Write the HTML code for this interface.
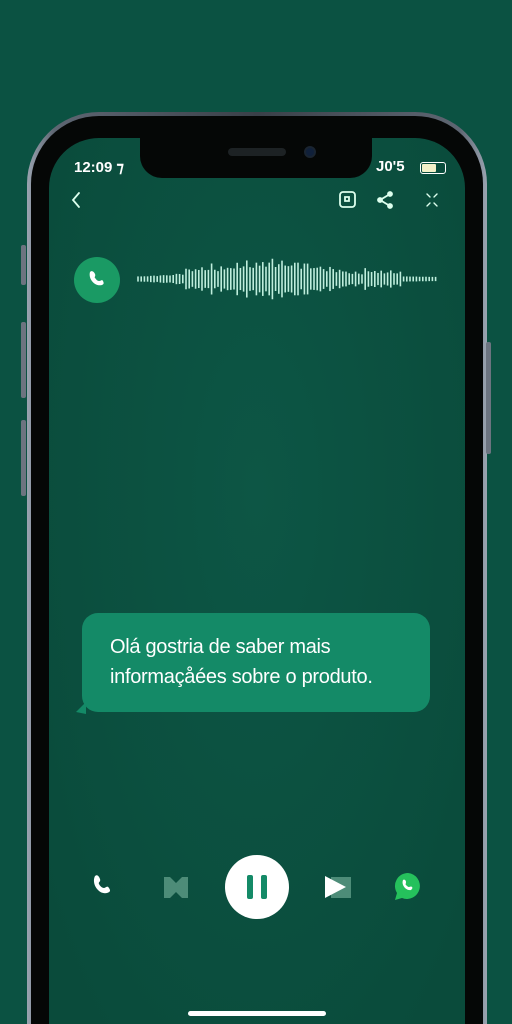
<!DOCTYPE html>
<html><head><meta charset="utf-8"><style>
*{margin:0;padding:0;box-sizing:border-box}
html,body{width:512px;height:1024px;overflow:hidden}
body{background:#0b5242;font-family:"Liberation Sans",sans-serif;position:relative}
#wrap{position:absolute;left:0;top:0;width:512px;height:1024px;overflow:hidden}
.frame{position:absolute;left:27px;top:112px;width:460px;height:912px;border-radius:72px 72px 0 0;background:linear-gradient(90deg,#9aa3b0,#5e6672 6%,#3a4048 50%,#5e6672 94%,#9aa3b0)}
.bezel{position:absolute;left:31px;top:116px;width:452px;height:908px;border-radius:68px 68px 0 0;background:#050706}
.screen{position:absolute;left:49px;top:138px;width:416px;height:886px;border-radius:50px 50px 0 0;background:radial-gradient(ellipse at 50% 40%,#0d5645,#0a4b3b 90%);overflow:hidden}
.notch{position:absolute;left:140px;top:116px;width:232px;height:62px;background:#050706;border-radius:0 0 22px 22px}
.spk{position:absolute;left:228px;top:148px;width:58px;height:8px;border-radius:4px;background:#1d2224}
.cam{position:absolute;left:304px;top:146px;width:12px;height:12px;border-radius:50%;background:#10203a;border:2px solid #1a2430}
.btn{position:absolute;width:5px;background:#6c7480;border-radius:2px}
.t{position:absolute;color:#fff;font-size:15px;font-weight:bold}
.bubble{position:absolute;left:82px;top:613px;width:348px;height:99px;background:#148a67;border-radius:16px;color:#fff;font-size:20px;line-height:30px;padding:19px 0 0 28px;letter-spacing:-0.3px}
</style></head><body><div id="wrap">
<div class="frame"></div>
<div class="btn" style="left:21px;top:245px;height:40px"></div>
<div class="btn" style="left:21px;top:322px;height:76px"></div>
<div class="btn" style="left:21px;top:420px;height:76px"></div>
<div class="btn" style="left:486px;top:342px;height:112px"></div>
<div class="bezel"></div>
<div class="screen"></div>
<div class="notch"></div><div class="spk"></div><div class="cam"></div>
<div class="t" style="left:74px;top:158px">12:09 ⁊</div>
<div class="t" style="left:376px;top:158px">J0'5</div>
<div style="position:absolute;left:420px;top:162px;width:26px;height:12px;border:1.5px solid #fff;border-radius:3px;padding:1px"><div style="width:14px;height:100%;background:#f3f0c8;border-radius:1px"></div></div>
<svg style="position:absolute;left:0;top:0" width="512" height="1024">
<g stroke="#dfe" stroke-width="1.8" fill="none" stroke-linecap="round">
<path d="M79 193l-6 7 6 7"/>
<rect x="340" y="192" width="15" height="15" rx="3"/><path d="M345 197h4v4h-4z"/>
<circle cx="390" cy="194" r="2" fill="#dfe"/><circle cx="380" cy="200" r="2" fill="#dfe"/><circle cx="390" cy="206" r="2" fill="#dfe"/><path d="M390 194l-10 6 10 6"/>
<path d="M427 194l3 3m7-3l-3 3m-7 9l3-3m7 3l-3-3" stroke-width="1.4"/>
</g>
<circle cx="97" cy="280" r="23" fill="#1a9a64"/>
<path d="M90 272c2-2 4 0 5 2s-1 3 0 4 2 3 4 3 3-2 4 0 1 3-1 4c-7 2-14-6-12-13z" fill="#fff"/>
<g id="wave" stroke="#bfeedd" stroke-width="1.6"></g>
<path d="M95 876c2-2 4 0 5 3s-2 3-1 5 3 4 5 4 3-3 5 0 1 4-2 5c-8 2-16-9-12-17z" fill="#fff"/>
<path d="M164 877h6l6 6 6-6h6v21h-6l-6-6-6 6h-6z" fill="#4d8c78"/>
<circle cx="257" cy="887" r="32" fill="#fff"/>
<rect x="247" y="875" width="6" height="24" rx="2" fill="#148a67"/><rect x="261" y="875" width="6" height="24" rx="2" fill="#148a67"/>
<rect x="331" y="877" width="20" height="21" fill="#4d8c78"/><path d="M325 876l21 11-21 11z" fill="#fff"/>
<path d="M408 873a13 13 0 1 1-6 25l-7 2 2-7a13 13 0 0 1 11-20z" fill="#25c15c"/>
<path d="M403 880c1-1 3 0 3 2s-1 2 0 3 2 2 3 2 2-1 3 0 0 2-1 3c-5 1-10-5-8-10z" fill="#fff"/>
<path d="M76 712l10-10v12z" fill="#148a67"/>
<rect x="188" y="1011" width="138" height="5" rx="2.5" fill="#fff"/>
</svg>
<div class="bubble">Olá gostria de saber mais<br>informaçåées sobre o produto.</div>
</div>
<script>
var g=document.getElementById('wave'),s='';
for(var x=138;x<=438;x+=3.2){var p=(x-138)/300;
var e=Math.exp(-Math.pow((p-0.45)/0.25,2));var r=0.5+0.5*Math.abs(Math.sin(x*1.7)*Math.cos(x*0.37));
var h=2+e*19*r+(p>0.15&&p<0.25?4*r:0)+(p>0.75&&p<0.88?5*r:0);
s+='<line x1="'+x+'" x2="'+x+'" y1="'+(279-h)+'" y2="'+(279+h)+'"/>';}
g.innerHTML=s;
</script>
</body></html>
